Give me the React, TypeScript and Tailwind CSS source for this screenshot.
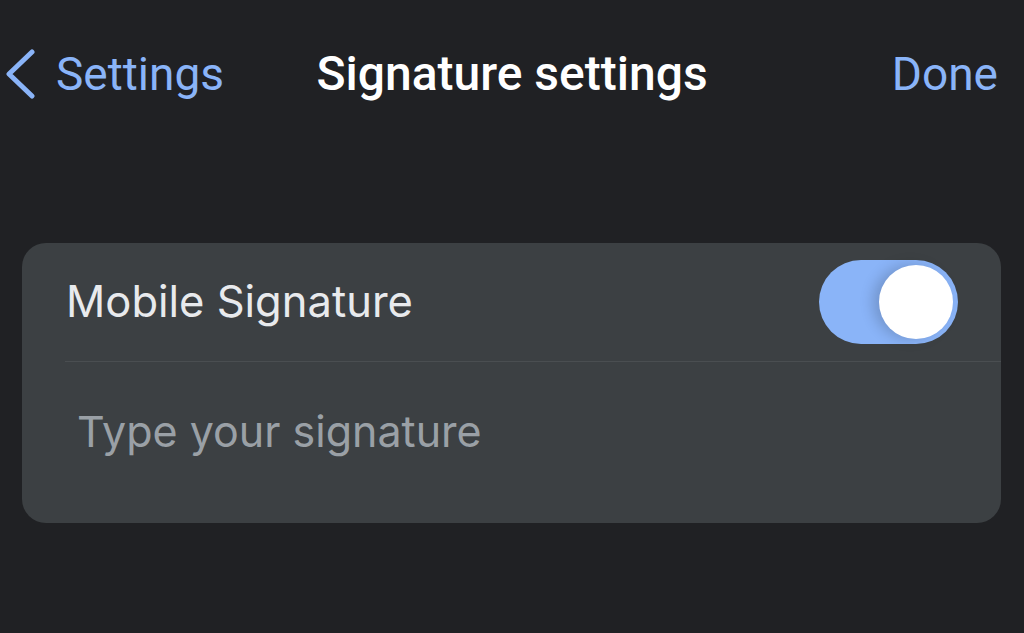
import React from 'react';

const App: React.FC = () => {
  const [enabled, setEnabled] = React.useState(true);

  return (
    <div className="min-h-[633px] w-full bg-[#202124] font-['Inter',sans-serif]">
      {/* Header */}
      <div className="relative flex h-[148px] items-center justify-between pl-[4px] pr-[26px]">
        <button type="button" className="flex items-center gap-[20px] text-[#8ab4f8]">
          <svg width="32" height="50" viewBox="0 0 32 50" fill="none">
            <path
              d="M28 3 L5 25 L28 47"
              stroke="currentColor"
              strokeWidth="5"
              strokeLinecap="round"
              strokeLinejoin="round"
            />
          </svg>
          <span className="font-['Roboto',sans-serif] text-[46px] leading-none">Settings</span>
        </button>
        <h1 className="absolute left-1/2 -translate-x-1/2 font-['Roboto',sans-serif] text-[48px] font-medium leading-none text-white">
          Signature settings
        </h1>
        <button type="button" className="font-['Roboto',sans-serif] text-[46px] leading-none text-[#8ab4f8]">
          Done
        </button>
      </div>

      {/* Card */}
      <div className="ml-[22px] mr-[23px] mt-[95px] overflow-hidden rounded-[24px] bg-[#3c4043]">
        <div className="flex h-[118px] items-center justify-between pl-[44px] pr-[43px]">
          <span className="text-[43.5px] text-[#e8eaed]">Mobile Signature</span>
          <button
            type="button"
            onClick={() => setEnabled(!enabled)}
            className={`flex h-[84px] w-[139px] items-center rounded-full px-[5px] ${
              enabled ? 'justify-end bg-[#8ab4f8]' : 'justify-start bg-[#5f6368]'
            }`}
          >
            <span className="h-[74px] w-[74px] rounded-full bg-white shadow-[-6px_0_14px_rgba(0,0,0,0.18)]" />
          </button>
        </div>
        <div className="ml-[43px] h-px bg-[#4a4e51]" />
        <div className="flex h-[161px] pl-[55px] pt-[48px]">
          <span className="text-[43px] leading-none text-[#9aa0a6]">Type your signature</span>
        </div>
      </div>
    </div>
  );
};

export default App;
